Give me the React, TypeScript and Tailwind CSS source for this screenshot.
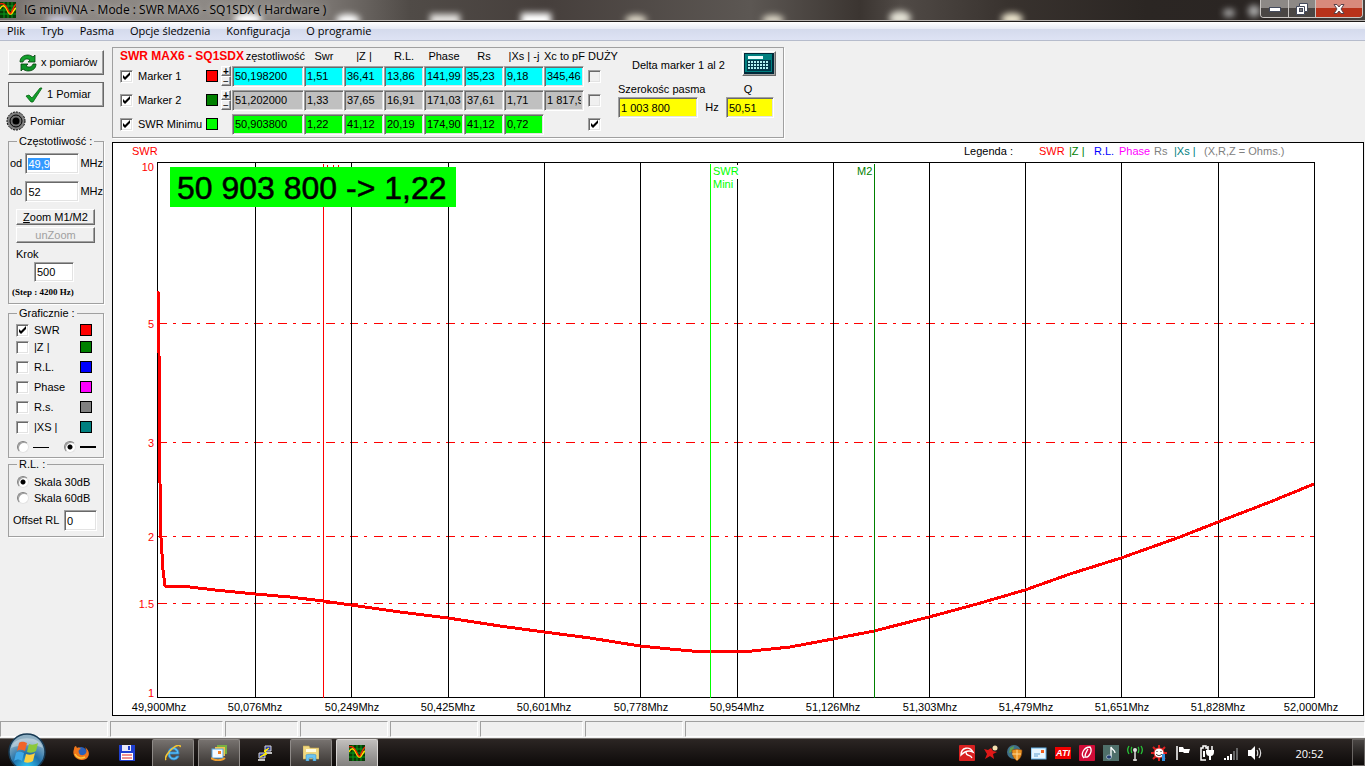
import { useEffect, useRef } from "react";
import type { ReactNode } from "react";

const sunken =
  "border border-t-[#a0a0a0] border-l-[#a0a0a0] border-r-white border-b-white shadow-[inset_1px_1px_0_#696969,inset_-1px_-1px_0_#e3e3e3] outline-none";
const raised =
  "border border-t-white border-l-white border-r-[#696969] border-b-[#696969] shadow-[inset_-1px_-1px_0_#a0a0a0]";

const menu = ["Plik", "Tryb", "Pasma", "Opcje śledzenia", "Konfiguracja", "O programie"];

const columns = ["Swr", "|Z |", "R.L.", "Phase", "Rs", "|Xs | -j", "Xc to pF"];

const markers = [
  {
    name: "Marker 1",
    swatch: "bg-[#ff0000]",
    cell: "bg-[#00ffff]",
    values: ["50,198200", "1,51", "36,41", "13,86", "141,99", "35,23", "9,18", "345,46"],
    spin: true,
    big: false,
  },
  {
    name: "Marker 2",
    swatch: "bg-[#008000]",
    cell: "bg-[#c0c0c0]",
    values: ["51,202000", "1,33", "37,65", "16,91", "171,03", "37,61", "1,71", "1 817,9"],
    spin: true,
    big: false,
  },
  {
    name: "SWR Minimu",
    swatch: "bg-[#00ff00]",
    cell: "bg-[#00ff00]",
    values: ["50,903800", "1,22", "41,12", "20,19", "174,90", "41,12", "0,72"],
    spin: false,
    big: true,
  },
];

const traces = [
  { name: "SWR", swatch: "bg-[#ff0000]", row: "h-3.5", on: true },
  { name: "|Z |", swatch: "bg-[#008000]", row: "h-5", on: false },
  { name: "R.L.", swatch: "bg-[#0000ff]", row: "h-5", on: false },
  { name: "Phase", swatch: "bg-[#ff00ff]", row: "h-5", on: false },
  { name: "R.s.", swatch: "bg-[#808080]", row: "h-5", on: false },
  { name: "|XS |", swatch: "bg-[#008080]", row: "h-5", on: false },
];

const legend = [
  { text: "SWR", x: 926, color: "#ff0000" },
  { text: "|Z |", x: 956, color: "#008000" },
  { text: "R.L.", x: 981, color: "#0000ff" },
  { text: "Phase", x: 1006, color: "#ff00ff" },
  { text: "Rs", x: 1041, color: "#808080" },
  { text: "|Xs |", x: 1061, color: "#008080" },
  { text: "(X,R,Z = Ohms.)", x: 1091, color: "#808080" },
];

const gridX = [142, 238, 335, 431, 527, 624, 720, 816, 912, 1008, 1105];

const freqLabels = [
  { x: 46, text: "49,900Mhz" },
  { x: 142, text: "50,076Mhz" },
  { x: 239, text: "50,249Mhz" },
  { x: 335, text: "50,425Mhz" },
  { x: 431, text: "50,601Mhz" },
  { x: 528, text: "50,778Mhz" },
  { x: 624, text: "50,954Mhz" },
  { x: 720, text: "51,126Mhz" },
  { x: 817, text: "51,303Mhz" },
  { x: 913, text: "51,479Mhz" },
  { x: 1009, text: "51,651Mhz" },
  { x: 1105, text: "51,828Mhz" },
  { x: 1198, text: "52,000Mhz" },
];

const swrLines = [5, 3, 2, 1.5];

const curve =
  "45,148 46,210 47,340 48,395 50,427 52,443 77,444 102,447 142,451 177,454 210,458 238,462 287,469 335,475 387,483 431,489 477,495 527,503 557,506 579,508 639,508 677,504 720,496 761,488 816,474 864,461 912,447 957,431 1008,415 1067,394 1105,379 1157,359 1201,341";

// log scale, 1 at the bottom and 10 at the top
function swrY(value: number) {
  return Math.round(554 - 535 * Math.log10(value));
}

function CheckBox({ label, on, gray }: { label: string; on: boolean; gray?: boolean }) {
  return (
    <span className="relative block size-[13px] shrink-0">
      <input
        type="checkbox"
        aria-label={label}
        defaultChecked={on}
        className={`peer block size-[13px] appearance-none ${gray ? "bg-[#f0f0f0]" : "bg-white"} ${sunken}`}
      />
      <svg viewBox="0 0 13 13" className="pointer-events-none absolute inset-0 hidden peer-checked:block">
        <path d="M3 5v3l2 2 5-5V2L5 7z" fill="#000" />
      </svg>
    </span>
  );
}

function Radio({ name, label, on }: { name: string; label: string; on: boolean }) {
  return (
    <input
      type="radio"
      name={name}
      aria-label={label}
      defaultChecked={on}
      className="size-3 shrink-0 appearance-none rounded-full border border-t-[#808080] border-l-[#808080] border-r-[#e3e3e3] border-b-[#e3e3e3] bg-white shadow-[inset_1px_1px_0_#a0a0a0] checked:bg-[radial-gradient(circle,#000_2px,#fff_3px)]"
    />
  );
}

function Group({ title, children, className }: { title: string; children: ReactNode; className: string }) {
  return (
    <fieldset className={`min-w-0 border border-[#a0a0a0] shadow-[1px_1px_0_#fff] ${className}`}>
      <legend className="ml-2 h-3 px-0.5 leading-3">{title}</legend>
      {children}
    </fieldset>
  );
}

function AppIcon() {
  return (
    <svg viewBox="0 0 16 16" className="size-4 shrink-0">
      <rect width="16" height="16" fill="#063c06" />
      <path d="M0 4h16M0 8h16M0 12h16M4 0v16M8 0v16M12 0v16" stroke="#0b9a1c" strokeWidth="1" />
      <path d="M0 7c2-4 4-4 6-1s3 7 5 6 3-5 5-6" fill="none" stroke="#ffe000" strokeWidth="1.5" />
      <path d="M0 2c3-1 5 0 7 4s3 6 4 5 2-6 5-9" fill="none" stroke="#ff2000" strokeWidth="1.3" />
    </svg>
  );
}

function TitleBar() {
  return (
    <header className="relative flex h-[22px] items-center overflow-hidden border-b border-[#1c1a19] bg-[linear-gradient(90deg,#6f6a66_0%,#8c8783_4%,#8d8985_18%,#817c78_23%,#504b47_30%,#463f3c_40%,#5c5753_55%,#3b3531_63%,#504a46_66%,#38322e_74%,#2b2623_84%,#2a2523_92%,#47423f_100%)]">
      <svg className="absolute inset-0 h-full w-full" aria-hidden="true">
        <defs>
          <filter id="glow" x="-50%" y="-50%" width="200%" height="200%">
            <feGaussianBlur stdDeviation="3" />
          </filter>
        </defs>
        <g filter="url(#glow)">
          <ellipse cx="60" cy="20" rx="14" ry="4" fill="#d0d0e8" />
          <ellipse cx="248" cy="19" rx="14" ry="6" fill="#fff" />
          <ellipse cx="348" cy="20" rx="12" ry="6" fill="#fff" />
          <rect x="430" y="14" width="30" height="12" fill="#e4e2df" />
          <rect x="521" y="13" width="30" height="14" fill="#fff" />
          <ellipse cx="636" cy="20" rx="11" ry="5" fill="#ded8c8" />
          <ellipse cx="773" cy="20" rx="11" ry="5" fill="#ded8c8" />
          <ellipse cx="900" cy="18" rx="11" ry="7" fill="#e4e2d6" />
          <ellipse cx="1012" cy="19" rx="11" ry="6" fill="#efe8d0" />
          <ellipse cx="1229" cy="13" rx="6" ry="4" fill="#aaa" />
          <ellipse cx="1254" cy="11" rx="6" ry="6" fill="#aaa" />
        </g>
      </svg>
      <div className="relative flex h-full flex-1 items-center border-b border-[#b5b1ae]">
        <AppIcon />
        <h1 className="ml-2 font-['Open_Sans','Noto_Sans',sans-serif] text-[12px] leading-5 whitespace-nowrap text-black [text-shadow:0_0_6px_#fff8]">
          IG miniVNA - Mode : SWR MAX6 - SQ1SDX ( Hardware )
        </h1>
        <div className="mr-0.5 ml-auto flex h-[18px] self-start overflow-hidden rounded-b border border-t-0 border-[#c9c5c2]">
          <button type="button" aria-label="Minimize" className="flex w-7 items-center justify-center border-r border-[#c9c5c2] bg-linear-to-b from-[#8d8986] from-50% to-[#4a4644] to-50%">
            <svg viewBox="0 0 12 6" className="h-1.5 w-3"><rect x=".5" y="1.5" width="11" height="4" fill="#fff" stroke="#444a5c" /></svg>
          </button>
          <button type="button" aria-label="Restore" className="flex w-[27px] items-center justify-center border-r border-[#c9c5c2] bg-linear-to-b from-[#8d8986] from-50% to-[#4a4644] to-50%">
            <svg viewBox="0 0 12 12" className="size-3">
              <path d="M3.500 .5h8v8h-3v3h-8v-8h3z" fill="#fff" stroke="#444a5c" />
              <rect x="3.500" y="5.500" width="3" height="3" fill="#777" stroke="#444a5c" />
              <path d="M4 3.500h4.500V8" fill="none" stroke="#444a5c" />
            </svg>
          </button>
          <button type="button" aria-label="Close" className="flex w-[46px] items-center justify-center bg-linear-to-b from-[#d88a7c] from-45% to-[#b8321a] to-50%">
            <svg viewBox="0 0 12 10" className="h-2.5 w-3">
              <path d="M1 .500h3L6 3l2-2.500h3L8 5l3 4.500H8L6 7 4 9.500H1L4 5z" fill="#fff" stroke="#59424a" />
            </svg>
          </button>
        </div>
      </div>
    </header>
  );
}

function Sidebar() {
  const from = useRef<HTMLInputElement>(null);

  useEffect(() => {
    from.current?.select();
  }, []);

  return (
    <aside className="flex w-28 shrink-0 flex-col px-2 pt-[9px]">
      <button type="button" className={`flex h-[25px] items-center pl-2.5 ${raised}`}>
        <svg viewBox="0 0 18 18" className="mr-1 size-[18px]">
          <path d="M1 8c0-5 4-7 8-7 2 0 4 1 5 2l2-2v7H9l2-2c-3-2-6-1-7 2z" fill="#12a02c" stroke="#04420c" strokeWidth=".8" />
          <path d="M17 10c0 5-4 7-8 7-2 0-4-1-5-2l-2 2v-7h7l-2 2c3 2 6 1 7-2z" fill="#0c9226" stroke="#04420c" strokeWidth=".8" />
        </svg>
        x pomiarów
      </button>
      <button type="button" className={`mt-[7px] flex h-[25px] items-center pl-4 ${raised} outline-1 -outline-offset-1 outline-[#696969]`}>
        <svg viewBox="0 0 18 16" className="mr-1 h-4 w-[18px]">
          <path d="M1 9l3-1 3 3L15 1l2 0L8 15H6z" fill="#12a02c" stroke="#056312" strokeWidth=".8" />
        </svg>
        1 Pomiar
      </button>
      <div className="mt-1 -ml-0.5 flex h-5 items-center gap-1">
        <svg viewBox="0 0 20 20" className="size-5">
          <circle cx="10" cy="10" r="9" fill="#808080" stroke="#000" strokeDasharray="2 1" />
          <circle cx="10" cy="10" r="6" fill="#707070" stroke="#000" />
          <circle cx="10" cy="10" r="3.500" fill="#000" />
        </svg>
        Pomiar
      </div>

      <Group title="Częstotliwość :" className="mt-1 h-[169px]">
        <div className="mt-1.5 flex h-[21px] items-center pl-px">
          <label htmlFor="from" className="w-4">od</label>
          <input ref={from} id="from" defaultValue="49,9" className={`h-[21px] w-[54px] bg-white px-0.5 selection:bg-[#3399ff] selection:text-white ${sunken}`} />
          <span className="ml-px">MHz</span>
        </div>
        <div className="mt-[7px] flex h-[21px] items-center pl-px">
          <label htmlFor="to" className="w-4">do</label>
          <input id="to" defaultValue="52" className={`h-[21px] w-[54px] bg-white px-0.5 ${sunken}`} />
          <span className="ml-px">MHz</span>
        </div>
        <div className="mt-[7px] mr-2 ml-[7px] flex flex-col gap-0.5">
          <button type="button" className={`h-4 leading-3 ${raised}`}>
            <u>Z</u>oom M1/M2
          </button>
          <button type="button" disabled className={`h-4 leading-3 text-[#a0a0a0] ${raised}`}>
            unZoom
          </button>
        </div>
        <label htmlFor="step" className="mt-[3px] ml-[7px] block leading-4">Krok</label>
        <input id="step" defaultValue="500" className={`ml-[25px] block h-5 w-10 bg-white px-0.5 ${sunken}`} />
        <p className="mt-1 ml-[3px] font-['Liberation_Serif',serif] text-[9px] leading-3 font-bold whitespace-nowrap">(Step : 4200 Hz)</p>
      </Group>

      <Group title="Graficznie :" className="mt-[3px] h-[151px]">
        <div className="pt-1 pr-[11px] pl-[7px]">
          {traces.map((trace) => (
            <label key={trace.name} className={`flex items-center gap-[5px] ${trace.row}`}>
              <CheckBox label={trace.name} on={trace.on} />
              <span className="flex-1">{trace.name}</span>
              <span className={`size-3 border border-black ${trace.swatch}`} />
            </label>
          ))}
          <div className="-mr-1 flex h-5 items-center justify-between pl-px">
            <Radio name="pen" label="Thin line" on={false} />
            <span className="h-px w-4 bg-black" />
            <span className="w-2" />
            <Radio name="pen" label="Thick line" on={true} />
            <span className="h-0.5 w-4 bg-black" />
          </div>
        </div>
      </Group>

      <Group title="R.L. :" className="h-[79px]">
        <div className="pt-1 pl-2">
          <label className="flex h-4 items-center gap-[5px]">
            <Radio name="scale" label="Skala 30dB" on={true} />
            Skala 30dB
          </label>
          <label className="flex h-4 items-center gap-[5px]">
            <Radio name="scale" label="Skala 60dB" on={false} />
            Skala 60dB
          </label>
        </div>
        <div className="mt-1 mr-1.5 ml-1 flex h-[21px] items-center justify-between">
          <label htmlFor="offset" className="whitespace-nowrap">Offset RL</label>
          <input id="offset" defaultValue="0" className={`h-[21px] w-[33px] bg-white px-0.5 ${sunken}`} />
        </div>
      </Group>
    </aside>
  );
}

function MarkerTable() {
  return (
    <table className="w-[496px] table-fixed border-collapse">
      <colgroup>
        <col className="w-[86px]" />
        <col className="w-[15px]" />
        <col className="w-[11px]" />
        <col className="w-[72px]" />
        {columns.map((column) => (
          <col key={column} className="w-10" />
        ))}
        <col className="w-8" />
      </colgroup>
      <thead>
        <tr className="h-[15px] leading-[15px] whitespace-nowrap">
          <th colSpan={3} className="text-left text-[12px] font-bold text-[#ff0000]">SWR MAX6 - SQ1SDX</th>
          <th className="text-right font-normal">
            <span className="-mr-px">zęstotliwość</span>
          </th>
          {columns.map((column) => (
            <th key={column} className="text-center font-normal">{column}</th>
          ))}
          <th className="pl-1 text-left font-normal">DUŻY</th>
        </tr>
      </thead>
      <tbody>
        {markers.map((marker) => (
          <tr key={marker.name} className="h-6">
            <td className="p-0">
              <label className="flex items-center gap-[5px] whitespace-nowrap">
                <CheckBox label={marker.name} on={true} />
                {marker.name}
              </label>
            </td>
            <td className="p-0">
              <span className={`block size-3 border border-black ${marker.swatch}`} />
            </td>
            <td className="p-0">
              {marker.spin && (
                <span className="flex flex-col">
                  <button type="button" aria-label={`${marker.name} up`} className={`h-2.5 w-2.5 text-[10px] leading-[7px] font-bold ${raised}`}>+</button>
                  <button type="button" aria-label={`${marker.name} down`} className={`h-2.5 w-2.5 text-[10px] leading-[7px] ${raised}`}>−</button>
                </span>
              )}
            </td>
            {marker.values.map((value, i) => (
              <td key={i} className="p-0">
                <input
                  readOnly
                  aria-label={`${marker.name} ${i === 0 ? "Częstotliwość" : columns[i - 1]}`}
                  defaultValue={value}
                  className={`block h-[21px] w-full px-0.5 ${marker.cell} ${sunken}`}
                />
              </td>
            ))}
            {marker.values.length < 8 && <td />}
            <td className="p-0 pl-1">
              <CheckBox label={`${marker.name} DUŻY`} on={marker.big} gray={!marker.big} />
            </td>
          </tr>
        ))}
      </tbody>
    </table>
  );
}

function TopPanel() {
  return (
    <section className="mt-1.5 flex w-[672px] border border-[#a0a0a0] py-px pl-[7px] shadow-[1px_1px_0_#fff]">
      <MarkerTable />
      <div className="ml-0.5 flex-1 pr-[9px]">
        <div className="flex h-7 items-center justify-between pl-3.5">
          <span className="pt-1 whitespace-nowrap">Delta marker 1 al 2</span>
          <button type="button" aria-label="Calculator" className={`-mr-0.5 h-[25px] w-[34px] ${raised}`}>
            <svg viewBox="0 0 32 23" className="h-full w-full" shapeRendering="crispEdges">
              <rect x="1" y="1" width="30" height="21" fill="#002838" />
              <rect x="2" y="2" width="27" height="18" fill="#008080" />
              <rect x="5" y="4" width="15" height="3" fill="#e8ffff" />
              <g fill="#003848">
                <rect x="4" y="8" width="24" height="11" />
              </g>
              <g fill="#b0f0f0">
                {[9, 12, 15].map((y) =>
                  [5, 8, 11, 14, 17, 20, 23].map((x) => <rect key={`${x}-${y}`} x={x} y={y} width="2" height="2" />),
                )}
              </g>
            </svg>
          </button>
        </div>
        <div className="grid grid-cols-[80px_28px_48px] items-center pt-1">
          <label htmlFor="band" className="h-4 leading-4 whitespace-nowrap">Szerokośc pasma</label>
          <span />
          <label htmlFor="q" className="h-4 pr-1 text-center leading-4">Q</label>
          <input id="band" readOnly defaultValue="1 003 800" className={`h-[21px] w-full bg-[#ffff00] px-0.5 ${sunken}`} />
          <span className="text-center">Hz</span>
          <input id="q" readOnly defaultValue="50,51" className={`h-[21px] w-full bg-[#ffff00] px-0.5 ${sunken}`} />
        </div>
      </div>
    </section>
  );
}

function Chart() {
  return (
    <section className="mt-1 border border-black bg-white">
      <svg viewBox="0 0 1250 572" className="block h-auto w-full text-[11px]" role="img" aria-label="SWR chart">
        <g transform="translate(.5 .5)" shapeRendering="crispEdges" fill="none">
          {swrLines.map((value) => (
            <path key={value} d={`M44 ${swrY(value)}H1201`} stroke="#ff0000" strokeDasharray="9 6 3 6" />
          ))}
          {gridX.map((x) => (
            <path key={x} d={`M${x} 19V554`} stroke="#000" />
          ))}
          <rect x="44" y="19" width="1157" height="535" stroke="#000" />
        </g>
        <polyline points={curve} fill="none" stroke="#ff0000" strokeWidth="3" shapeRendering="crispEdges" />
        <g transform="translate(.5 .5)" shapeRendering="crispEdges">
          <path d="M210 20V554" stroke="#ff0000" />
          <path d="M597 20V554" stroke="#00ff00" />
          <path d="M761 20V554" stroke="#008000" />
        </g>

        <path d="M214 23h1M220 23h1M225 23h1" stroke="#ff0000" strokeWidth="2" />
        <rect x="599" y="22" width="26" height="14" fill="#fff" />
        <text x="600" y="32" fill="#00ff00">SWR</text>
        <text x="600" y="45" fill="#00ff00">Mini</text>
        <text x="744" y="32" fill="#008000">M2</text>

        <rect x="57" y="24" width="286" height="40" fill="#00ff00" />
        <text x="64" y="56" fontSize="32" stroke="#000" strokeWidth=".5">{"50 903 800 -> 1,22"}</text>

        <g fill="#ff0000">
          <text x="19" y="12">SWR</text>
          <text x="41" y="28" textAnchor="end">10</text>
          {swrLines.map((value) => (
            <text key={value} x="41" y={swrY(value) + 5} textAnchor="end">{value}</text>
          ))}
          <text x="41" y="554" textAnchor="end">1</text>
        </g>
        {freqLabels.map((label) => (
          <text key={label.text} x={label.x} y="568" textAnchor="middle">{label.text}</text>
        ))}
        <text x="851" y="12">Legenda :</text>
        {legend.map((item) => (
          <text key={item.text} x={item.x} y="12" fill={item.color}>{item.text}</text>
        ))}
      </svg>
    </section>
  );
}

const statusPanels = ["w-[108px]", "w-[113px]", "w-[73px]", "w-[88px]", "w-[88px]", "w-[103px]", "w-[98px]", "flex-1"];

function StatusBar() {
  return (
    <div className="flex gap-0.5 pt-[5px] pb-px">
      {statusPanels.map((width, i) => (
        <span key={i} className={`h-4 border border-t-[#a0a0a0] border-l-[#a0a0a0] border-r-white border-b-white ${width}`} />
      ))}
    </div>
  );
}

const pinned: { name: string; open: string; icon: ReactNode }[] = [
  {
    name: "Firefox",
    open: "",
    icon: (
      <>
        <circle cx="8" cy="8" r="6" fill="#2a5fb8" />
        <path d="M1 4c0-2 1-3 2-3l1 2c2-1 3 0 4 1-2 0-3 2-2 4 1 3 5 3 7 0 1-2 0-4-1-6 5 4 5 9 1 12-4 2-8 1-11-2C0 9 0 7 1 4z" fill="#f0761a" />
        <path d="M2 9c2 4 6 5 10 3" stroke="#ffc83a" strokeWidth="1.500" fill="none" />
      </>
    ),
  },
  {
    name: "Total Commander",
    open: "",
    icon: (
      <>
        <path d="M0 0h16v16H1l-1-1z" fill="#1f3fd0" />
        <rect x="3" y="0" width="9" height="6" fill="#e8e8f8" />
        <rect x="9" y="1" width="2" height="4" fill="#1f3fd0" />
        <rect x="2" y="8" width="12" height="7" fill="#fff" />
        <path d="M3 10h10M3 13h10" stroke="#e02020" />
      </>
    ),
  },
  {
    name: "Internet Explorer",
    open: "border-[#8f8b88] bg-linear-to-b from-[#77726f] to-[#3a3633]",
    icon: (
      <>
        <path d="M14 9H5c0 4 5 5 6.500 2h2.500c-2 6-11 5-11-2.500C3 0 14 0 14 9z M5 7h6.500C11 3.500 5.500 3.500 5 7z" fill="#5cc0f6" stroke="#2a84cc" strokeWidth=".8" fillRule="evenodd" />
        <path d="M1 15C-1 13 3 7 8 3s8-3 7-1" fill="none" stroke="#f4c430" strokeWidth="1.600" />
      </>
    ),
  },
  {
    name: "Mail",
    open: "border-[#8f8b88] bg-linear-to-b from-[#77726f] to-[#3a3633]",
    icon: (
      <>
        <rect x="6" y="0" width="10" height="9" fill="#76b043" />
        <rect x="4" y="2" width="10" height="9" fill="#f2c24a" />
        <rect x="1" y="4" width="11" height="9" fill="#f4faff" stroke="#58a8e0" />
        <rect x="7" y="6" width="3" height="3" fill="#f08028" />
        <path d="M0 13c4 3 10 3 14 0" stroke="#f0a030" strokeWidth="2" fill="none" />
      </>
    ),
  },
  {
    name: "PuTTY",
    open: "",
    icon: (
      <>
        <path d="M8 1h6v5H8zM2 8h6v5H2z" fill="#3040a0" stroke="#d8d8d8" />
        <path d="M8 8h7M1 15h7" stroke="#c0c0c0" strokeWidth="2" />
        <path d="M12 3L7 6l2 2-6 4 7-3-2-2z" fill="#ffee00" stroke="#ffee00" />
      </>
    ),
  },
  {
    name: "Explorer",
    open: "border-[#8f8b88] bg-linear-to-b from-[#77726f] to-[#3a3633]",
    icon: (
      <>
        <path d="M0 1h6l1 2h9v11H0z" fill="#f0d880" stroke="#c8a850" strokeWidth=".6" />
        <path d="M3 4h10v3H3z" fill="#fffbe0" />
        <path d="M3 16v-6c0-1 10-1 10 0v6h-3v-3H6v3z" fill="#6cc4f0" stroke="#2f88c0" strokeWidth=".5" />
      </>
    ),
  },
];

const tray: { name: string; icon: ReactNode }[] = [
  {
    name: "Avira",
    icon: (
      <>
        <rect width="16" height="16" rx="1" fill="#d82020" />
        <path d="M2 10C2 2 11 1 14 7c-4-2-8-1-12 3z" fill="none" stroke="#fff" strokeWidth="1.400" />
        <path d="M7 7c0 5 4 2 6 6" stroke="#fff" strokeWidth="1.300" fill="none" />
      </>
    ),
  },
  {
    name: "IrfanView",
    icon: (
      <>
        <path d="M1 4l4 1 3-2 2 3 4 1-4 2 1 5-4-3-5 3 2-5z" fill="#e01818" />
        <circle cx="12" cy="3" r="2.500" fill="#f4e0b0" />
      </>
    ),
  },
  {
    name: "Shield",
    icon: (
      <>
        <circle cx="7" cy="7" r="7" fill="#3f7088" />
        <path d="M3 3l4-2-1 5-4 2z" fill="#5fa050" />
        <path d="M5 5l5-1 5 1c0 5-1 8-5 11-4-3-5-6-5-11z" fill="#e89020" stroke="#804010" strokeWidth=".6" />
        <path d="M10 5v10M5 9h9" stroke="#ffd890" />
      </>
    ),
  },
  {
    name: "Mail",
    icon: (
      <>
        <rect x="0" y="3" width="15" height="11" fill="#e8f6ff" stroke="#60b0e8" />
        <rect x="10" y="5" width="3" height="3" fill="#f06020" />
        <path d="M3 9h6M3 11h4" stroke="#60a0d0" />
      </>
    ),
  },
  {
    name: "ATI",
    icon: (
      <>
        <rect y="2" width="16" height="12" fill="#f00000" />
        <text x="8" y="11" fontSize="9" fontWeight="bold" fontStyle="italic" fill="#fff" textAnchor="middle">ATI</text>
      </>
    ),
  },
  {
    name: "Feather",
    icon: (
      <>
        <rect width="16" height="16" rx="1" fill="#d00c38" />
        <path d="M5 13C1 9 5 2 11 2c3 4-1 11-5 10 0-4 2-6 3-8" fill="none" stroke="#fff" strokeWidth="1.300" />
      </>
    ),
  },
  {
    name: "Music",
    icon: (
      <>
        <rect width="16" height="16" fill="#4f6f6a" />
        <path d="M8 12V2c1 3 4 3 4 6" stroke="#fff" fill="none" strokeWidth="1.300" />
        <ellipse cx="6" cy="12" rx="2.500" ry="2" fill="#203c70" stroke="#d0e0f0" strokeWidth=".6" />
      </>
    ),
  },
  {
    name: "Wireless",
    icon: (
      <>
        <path d="M5 2c-1 1-1 4 0 6M2 1c-2 3-2 5 0 8M11 2c1 1 1 4 0 6M14 1c2 3 2 5 0 8" stroke="#28c838" fill="none" strokeWidth="1.300" />
        <path d="M8 6v10M6 15h4" stroke="#ddd" strokeWidth="1.500" />
        <circle cx="8" cy="5" r="2" fill="#ddd" />
      </>
    ),
  },
  {
    name: "Messenger",
    icon: (
      <>
        <path d="M8 0v16M0 8h16M2 2l12 12M14 2L2 14" stroke="#e02020" strokeWidth="2" />
        <circle cx="8" cy="8" r="5" fill="#fff" stroke="#e02020" />
        <path d="M6 6v1M10 6v1M5 9c2 2 4 2 6 0" stroke="#222" fill="none" />
        <rect x="11" y="9" width="3" height="7" fill="#3090e0" />
      </>
    ),
  },
  {
    name: "Action Center",
    icon: (
      <>
        <path d="M2 1v14" stroke="#fff" strokeWidth="1.500" />
        <path d="M4 2h4l1 2h6l-1 3 0 1H9L8 7H4z" fill="#fff" />
      </>
    ),
  },
  {
    name: "Power",
    icon: (
      <>
        <path d="M7 15H2V3h2V1h3v2h2" fill="none" stroke="#fff" strokeWidth="1.500" />
        <path d="M4 6h2v6H4z" fill="#fff" />
        <path d="M9 1v4M13 1v4" stroke="#fff" strokeWidth="1.500" />
        <path d="M7 5h8v2c0 3-2 4-3 4v4h-2v-4c-1 0-3-1-3-4z" fill="#fff" />
      </>
    ),
  },
  {
    name: "Network",
    icon: (
      <>
        <path d="M1 13h2v2H1zM4 11h2v4H4zM7 9h2v6H7z" fill="#fff" />
        <path d="M10 6h2v9h-2zM13 3h2v12h-2z" fill="#666" />
      </>
    ),
  },
  {
    name: "Volume",
    icon: (
      <>
        <path d="M1 5h3l4-4v14l-4-4H1z" fill="#fff" />
        <path d="M10 5c1 2 1 4 0 6M12 3c2 3 2 7 0 10" stroke="#ddd" fill="none" strokeWidth="1.200" />
      </>
    ),
  },
];

function Taskbar() {
  return (
    <nav className="relative flex h-7 border-t border-[#75716e] bg-linear-to-b from-[#2c2624] to-[#0d0a09] pl-[60px] text-white">
      <button type="button" aria-label="Start" className="absolute -top-1.5 left-2 h-[34px] w-[38px] overflow-hidden">
        <svg viewBox="0 0 38 34" className="h-full w-full">
          <defs>
            <radialGradient id="orb" cx=".5" cy=".95" r=".8">
              <stop offset="0" stopColor="#30d0ff" />
              <stop offset=".5" stopColor="#1e6fa8" />
              <stop offset="1" stopColor="#8fb0c4" />
            </radialGradient>
          </defs>
          <circle cx="19" cy="19" r="18" fill="url(#orb)" stroke="#173a54" strokeWidth="1.500" />
          <path d="M3 15C6 2 32 2 35 15c-8-4-24-3-32 0z" fill="#fff" opacity=".35" />
          <path d="M11 10c3-2 5-1 8 0l-2 8c-3-1-5-2-8 0z" fill="#f06428" />
          <path d="M21 11c3 1 5 1 9-1l-2 8c-3 2-6 2-9 1z" fill="#8cc83c" />
          <path d="M8 20c3-2 5-1 8 0l-2 8c-3-2-5-2-8 0z" fill="#3fa8e8" />
          <path d="M18 21c3 1 6 1 9-1l-2 8c-3 2-6 2-9 1z" fill="#fcd040" />
        </svg>
      </button>
      <div className="flex flex-1 gap-1">
        {pinned.map((app) => (
          <button key={app.name} type="button" aria-label={app.name} className={`flex w-[42px] items-center justify-center rounded-t-xs border border-b-0 ${app.open || "border-transparent"}`}>
            <svg viewBox="0 0 16 16" className="size-4">{app.icon}</svg>
          </button>
        ))}
        <button type="button" aria-label="IG miniVNA" className="flex w-[42px] items-center justify-center rounded-t-xs border border-b-0 border-[#d8d5d3] bg-linear-to-b from-[#c2bfbd] to-[#82807e]">
          <AppIcon />
        </button>
      </div>
      {tray.map((item) => (
        <button key={item.name} type="button" aria-label={item.name} className="flex w-6 items-center justify-center">
          <svg viewBox="0 0 16 16" className="size-4">{item.icon}</svg>
        </button>
      ))}
      <time className="w-[85px] self-center pt-0.5 text-center font-['Open_Sans','Noto_Sans',sans-serif] text-[11px] leading-4">20:52</time>
      <button type="button" aria-label="Show desktop" className="w-[13px] border border-[#6a6664] bg-linear-to-b from-[#4a4644] to-[#0d0a09]" />
    </nav>
  );
}

export default function App() {
  return (
    <div className="flex min-h-screen flex-col bg-[#f0f0f0] font-['Liberation_Sans',Arial,sans-serif] text-[11px] text-black">
      <TitleBar />
      <nav className="flex h-[19px] items-center gap-4 border-b border-[#b6bccc] bg-[linear-gradient(#fff_0%,#e6eaf5_38%,#d4daec_39%,#dee3f4_100%)] pl-[7px] font-['Open_Sans','Noto_Sans',sans-serif]">
        {menu.map((item) => (
          <button key={item} type="button" className="leading-4 whitespace-nowrap">{item}</button>
        ))}
      </nav>
      <main className="flex flex-1">
        <Sidebar />
        <div className="min-w-0 flex-1 pr-px">
          <TopPanel />
          <Chart />
        </div>
      </main>
      <StatusBar />
      <Taskbar />
    </div>
  );
}
